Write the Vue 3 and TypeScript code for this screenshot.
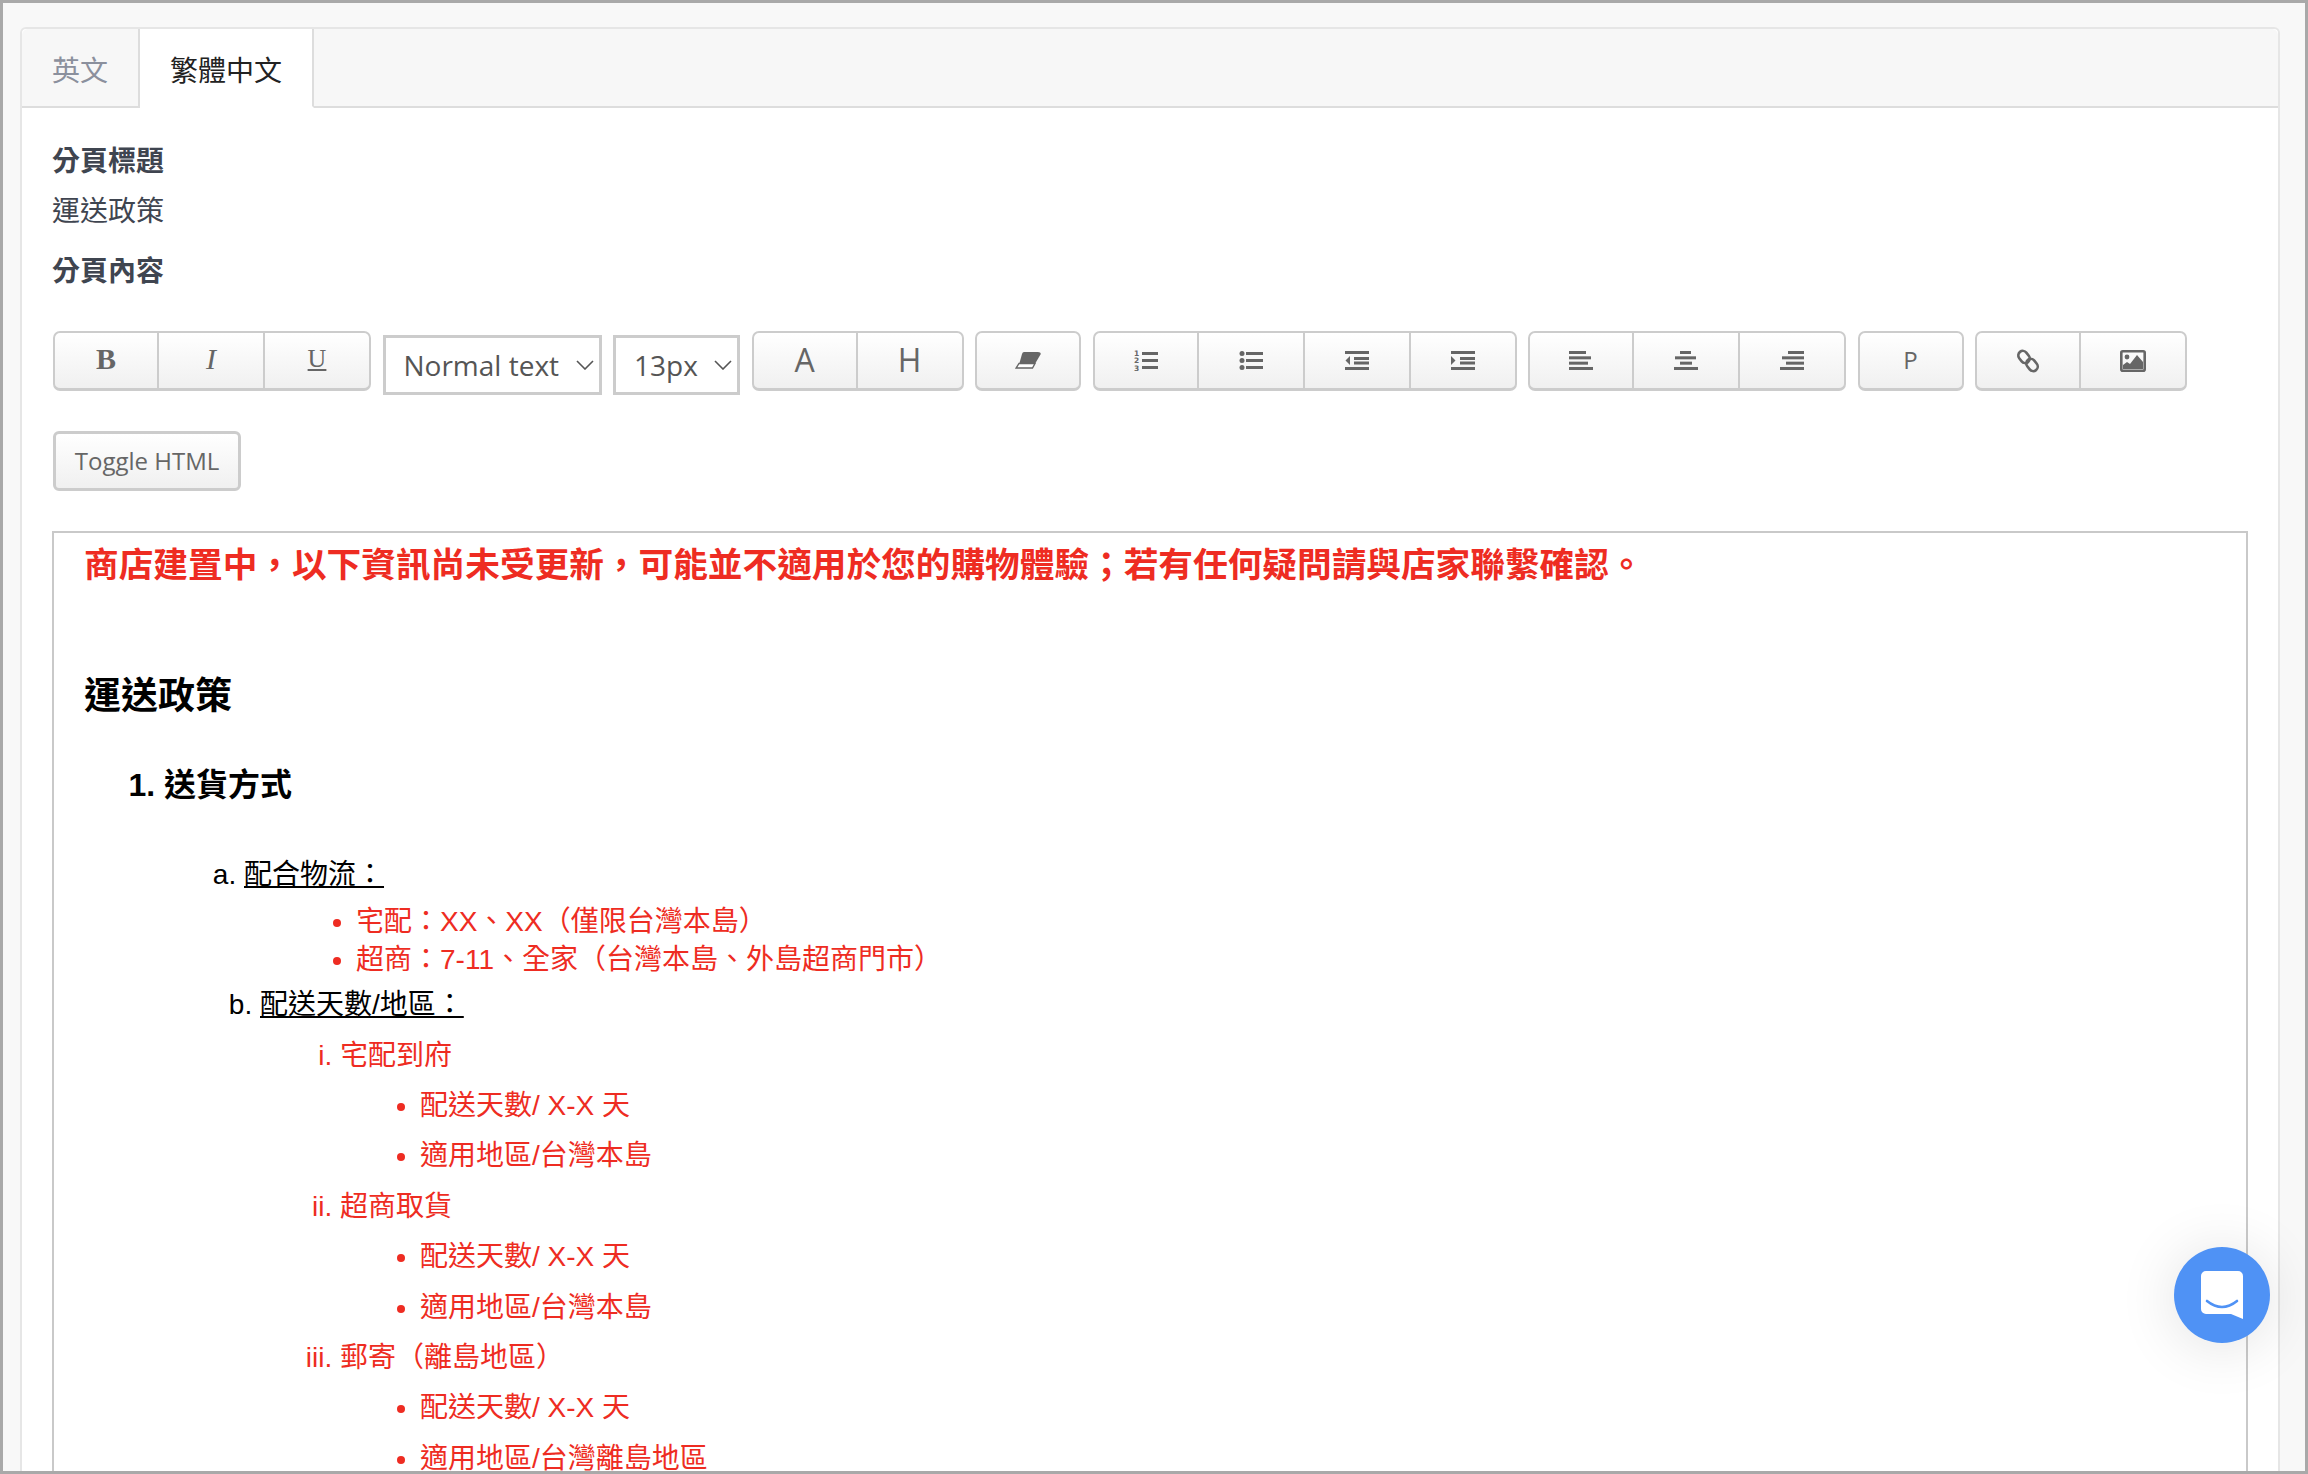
<script setup lang="ts">
import { ref } from 'vue'

interface TabItem {
  key: string
  name: string
}

const tabs: TabItem[] = [
  { key: 'en', name: '英文' },
  { key: 'zh-hant', name: '繁體中文' }
]
const activeTab = ref('zh-hant')

const alignBars = [
  { key: 'left', rows: [[0, 17], [0, 22], [0, 19], [0, 24]] },
  { key: 'center', rows: [[6, 11], [1, 21], [6, 12], [0, 24]] },
  { key: 'right', rows: [[8, 16], [2, 22], [6, 18], [0, 24]] }
]

const deliveryGroups = [
  { title: '宅配到府', area: '適用地區/台灣本島' },
  { title: '超商取貨', area: '適用地區/台灣本島' },
  { title: '郵寄（離島地區）', area: '適用地區/台灣離島地區' }
]
</script>

<template>
  <div class="page">
    <div class="panel">
      <!-- 分頁 -->
      <div class="tabs">
        <div
          v-for="tab in tabs"
          :key="tab.key"
          :class="{ active: activeTab === tab.key }"
          class="tab"
          @click="activeTab = tab.key"
        >
          {{ tab.name }}
        </div>
      </div>

      <div class="panel-body">
        <div class="label">分頁標題</div>
        <div class="value">運送政策</div>
        <div class="label label-content">分頁內容</div>

        <!-- 工具列 -->
        <div class="toolbar">
          <div class="btn-group">
            <button class="btn serif"><b>B</b></button>
            <button class="btn serif"><i>I</i></button>
            <button class="btn serif small"><u>U</u></button>
          </div>

          <label class="select-box select-format">
            <select>
              <option>Normal text</option>
              <option>Heading 1</option>
              <option>Heading 2</option>
            </select>
            <svg class="chevron" viewBox="0 0 18 10"><path d="M1 1l8 8 8-8" /></svg>
          </label>
          <label class="select-box select-size">
            <select>
              <option>13px</option>
              <option>16px</option>
              <option>18px</option>
            </select>
            <svg class="chevron" viewBox="0 0 18 10"><path d="M1 1l8 8 8-8" /></svg>
          </label>

          <div class="btn-group">
            <button class="btn letter">A</button>
            <button class="btn letter">H</button>
          </div>

          <div class="btn-group">
            <button class="btn">
              <svg width="26" height="17" viewBox="0 0 26 17">
                <path class="fill" d="M9 0H23Q26.5 0 25.5 2.5L20.5 11H4.5L7 2Q7.6 0 9 0Z" />
                <path d="M4 11.5H20L17.5 16H1.2Z" fill="#fff" stroke="#666" stroke-width="1.4" />
              </svg>
            </button>
          </div>

          <div class="btn-group">
            <button class="btn">
              <svg width="24" height="22" viewBox="0 0 24 22">
                <rect class="fill" x="8" y="2" width="16" height="3" />
                <rect class="fill" x="8" y="9" width="16" height="3" />
                <rect class="fill" x="8" y="16" width="16" height="3" />
                <text class="digit" x="0" y="6">1</text>
                <text class="digit" x="0" y="13">2</text>
                <text class="digit" x="0" y="20.5">3</text>
              </svg>
            </button>
            <button class="btn">
              <svg width="24" height="22" viewBox="0 0 24 22">
                <circle class="fill" cx="3" cy="3.5" r="2.5" />
                <circle class="fill" cx="3" cy="10.5" r="2.5" />
                <circle class="fill" cx="3" cy="17.5" r="2.5" />
                <rect class="fill" x="7" y="2" width="17" height="3" />
                <rect class="fill" x="7" y="9" width="17" height="3" />
                <rect class="fill" x="7" y="16" width="17" height="3" />
              </svg>
            </button>
            <button class="btn">
              <svg width="24" height="19" viewBox="0 0 24 19">
                <rect class="fill" width="24" height="3" />
                <rect class="fill" x="9" y="6" width="15" height="3" />
                <rect class="fill" x="9" y="10.5" width="15" height="3" />
                <rect class="fill" y="16" width="24" height="3" />
                <path class="fill" d="M5 5V14L0.5 9.5Z" />
              </svg>
            </button>
            <button class="btn">
              <svg width="24" height="19" viewBox="0 0 24 19">
                <rect class="fill" width="24" height="3" />
                <rect class="fill" x="9" y="6" width="15" height="3" />
                <rect class="fill" x="9" y="10.5" width="15" height="3" />
                <rect class="fill" y="16" width="24" height="3" />
                <path class="fill" d="M0 5V14L4.5 9.5Z" />
              </svg>
            </button>
          </div>

          <div class="btn-group">
            <button v-for="icon in alignBars" :key="icon.key" class="btn">
              <svg width="24" height="19" viewBox="0 0 24 19">
                <rect
                  v-for="(row, index) in icon.rows"
                  :key="index"
                  class="fill"
                  :x="row[0]"
                  :y="index * 5.33"
                  :width="row[1]"
                  height="3"
                />
              </svg>
            </button>
          </div>

          <div class="btn-group">
            <button class="btn letter small-letter">P</button>
          </div>

          <div class="btn-group">
            <button class="btn">
              <svg width="24" height="24" viewBox="0 0 24 24">
                <rect class="outline" x="1.5" y="3.5" width="13" height="9" rx="4.5" transform="rotate(52 8 8)" />
                <rect class="outline" x="9.5" y="11.5" width="13" height="9" rx="4.5" transform="rotate(52 16 16)" />
              </svg>
            </button>
            <button class="btn">
              <svg width="26" height="22" viewBox="0 0 26 22">
                <rect class="outline" x="1.3" y="1.3" width="23.4" height="19.4" rx="1.5" />
                <circle class="fill" cx="7" cy="7" r="2.4" />
                <path class="fill" d="M3 19V15L7 12L10 14L17 5L23 12V19Z" />
              </svg>
            </button>
          </div>
        </div>

        <button class="toggle-html">Toggle HTML</button>

        <!-- 編輯區 -->
        <div class="editor">
          <p class="notice">商店建置中，以下資訊尚未受更新，可能並不適用於您的購物體驗；若有任何疑問請與店家聯繫確認。</p>
          <h2 class="policy-title">運送政策</h2>
          <ol class="level-1">
            <li>
              <span class="section-title">送貨方式</span>
              <ol class="level-2">
                <li class="method">
                  <u>配合物流：</u>
                  <ul class="carriers">
                    <li>宅配：XX、XX（僅限台灣本島）</li>
                    <li>超商：7-11、全家（台灣本島、外島超商門市）</li>
                  </ul>
                </li>
                <li class="method method-days">
                  <u>配送天數/地區：</u>
                  <ol class="level-3">
                    <li v-for="group in deliveryGroups" :key="group.title">
                      {{ group.title }}
                      <ul class="level-4">
                        <li>配送天數/ X-X 天</li>
                        <li>{{ group.area }}</li>
                      </ul>
                    </li>
                  </ol>
                </li>
              </ol>
            </li>
          </ol>
        </div>
      </div>
    </div>

    <!-- 客服按鈕 -->
    <div class="chat-launcher">
      <svg width="42" height="48" viewBox="0 0 42 48">
        <path d="M5 0H37a5 5 0 0 1 5 5V48L30 43H5a5 5 0 0 1-5-5V5a5 5 0 0 1 5-5Z" fill="#fff" />
        <path d="M6 30Q21 42 36 30" fill="none" stroke="#4f92f5" stroke-width="2.6" stroke-linecap="round" />
      </svg>
    </div>
  </div>
</template>

<style scoped>
.page {
  position: relative;
  box-sizing: border-box;
  width: 2308px;
  height: 1474px;
  padding: 24px 25px 0 17px;
  overflow: hidden;
  border: 3px solid #a9a9a9;
  background-color: #f8f8f8;
  font-family: "Open Sans", "Noto Sans CJK TC", sans-serif;
}

.panel {
  box-sizing: border-box;
  height: 1500px;
  border: 2px solid #e6e6e6;
  border-radius: 6px 6px 0 0;
  background-color: #fff;
}

.tabs {
  display: flex;
  height: 79px;
  box-sizing: border-box;
  border-bottom: 2px solid #ddd;
  border-radius: 6px 6px 0 0;
  background-color: #f7f7f7;
}

.tab {
  box-sizing: border-box;
  width: 118px;
  height: 79px;
  padding-top: 20px;
  border-right: 2px solid #ddd;
  font-size: 28px;
  line-height: 42px;
  text-align: center;
  color: #8b909d;
  cursor: pointer;
}

.tab.active {
  width: 174px;
  background-color: #fff;
  border-bottom: 2px solid #fff;
  color: #222;
}

.panel-body {
  padding: 32px 30px 0;
}

.label {
  font-size: 28px;
  font-weight: 700;
  line-height: 40px;
  color: #3f4550;
}

.value {
  margin-top: 10px;
  font-size: 28px;
  line-height: 40px;
  color: #3f4550;
}

.label-content {
  margin-top: 20px;
}

.toolbar {
  display: flex;
  align-items: flex-start;
  gap: 11.5px;
  height: 64px;
  margin: 41px 0 0 1px;
}

.btn-group {
  display: flex;
}

.btn {
  display: flex;
  align-items: center;
  justify-content: center;
  box-sizing: border-box;
  width: 106px;
  height: 60px;
  padding: 0;
  border: 3px solid #ccc;
  border-top-width: 2px;
  border-left-width: 0;
  border-right-width: 2px;
  background: linear-gradient(to bottom, #fff, #f0f0f0);
  color: #666;
  cursor: pointer;
}

.btn:first-child {
  border-left-width: 2px;
  border-radius: 7px 0 0 7px;
}

.btn:last-child {
  border-radius: 0 7px 7px 0;
}

.btn:only-child {
  border-radius: 7px;
}

.serif {
  padding-bottom: 4px;
  font-family: "Liberation Serif", serif;
  font-size: 30px;
}

.serif.small {
  font-size: 26px;
}

.letter {
  padding-bottom: 2px;
  font-family: "Open Sans", sans-serif;
  font-size: 32px;
}

.small-letter {
  font-size: 24px;
  font-weight: 400;
}

.fill {
  fill: #666;
}

.outline {
  fill: none;
  stroke: #666;
  stroke-width: 2.6;
}

.digit {
  fill: #666;
  font-family: "DejaVu Sans", sans-serif;
  font-size: 7.5px;
  font-weight: 700;
}

.select-box {
  display: flex;
  align-items: center;
  box-sizing: border-box;
  height: 60px;
  margin-top: 4px;
  border: 3px solid #ccc;
  background-color: #fff;
}

.select-format {
  width: 219px;
}

.select-size {
  width: 127px;
}

.select-box select {
  flex: 1;
  min-width: 0;
  height: 100%;
  padding: 0 0 0 18px;
  border: 0;
  outline: none;
  appearance: none;
  background: transparent;
  font-family: "Open Sans", sans-serif;
  font-size: 28px;
  color: #555;
}

.chevron {
  flex-shrink: 0;
  width: 18px;
  height: 10px;
  margin-right: 5px;
  fill: none;
  stroke: #555;
  stroke-width: 1.6;
}

.toggle-html {
  display: block;
  box-sizing: border-box;
  width: 188px;
  height: 60px;
  margin: 36px 0 0 1px;
  padding: 0 0 2px;
  border: 3px solid #ccc;
  border-radius: 6px;
  background: linear-gradient(to bottom, #fff, #f0f0f0);
  font-family: "Open Sans", sans-serif;
  font-size: 24px;
  color: #666;
  cursor: pointer;
}

.editor {
  box-sizing: border-box;
  height: 1000px;
  margin-top: 40px;
  padding: 10px 30px 0;
  border: 2px solid #c9c9c9;
  background-color: #fff;
  font-family: "Liberation Sans", "Noto Sans CJK TC", sans-serif;
  color: #000;
}

.notice {
  margin: 0;
  font-size: 34.67px;
  font-weight: 700;
  line-height: 44px;
  color: #ee2c22;
}

.policy-title {
  margin: 85px 0 0;
  font-size: 37px;
  font-weight: 700;
  line-height: 50px;
}

ol,
ul {
  margin: 0;
  padding: 0;
}

.level-1 {
  margin-top: 41px;
  padding-left: 80px;
  font-size: 32px;
  font-weight: 700;
  line-height: 44px;
}

.level-2 {
  margin-top: 49px;
  padding-left: 80px;
  list-style-type: lower-alpha;
  font-size: 28px;
  font-weight: 400;
  line-height: 38px;
}

.method-days {
  margin-top: 7px;
  margin-left: 16px;
}

.carriers {
  margin-top: 9px;
  padding-left: 112px;
  list-style-type: disc;
  color: #ee2c22;
}

.level-3 {
  margin-top: 6.5px;
  padding-left: 80px;
  list-style-type: lower-roman;
  line-height: 50.4px;
  color: #ee2c22;
}

.level-4 {
  padding-left: 80px;
  list-style-type: disc;
}

.chat-launcher {
  position: absolute;
  right: 35px;
  bottom: 128px;
  display: flex;
  align-items: center;
  justify-content: center;
  width: 96px;
  height: 96px;
  border-radius: 50%;
  background-color: #4f92f5;
  box-shadow: 0 4px 60px rgba(0, 0, 0, 0.12);
}
</style>

<style>
html,
body {
  margin: 0;
  background: #fff;
}
</style>
